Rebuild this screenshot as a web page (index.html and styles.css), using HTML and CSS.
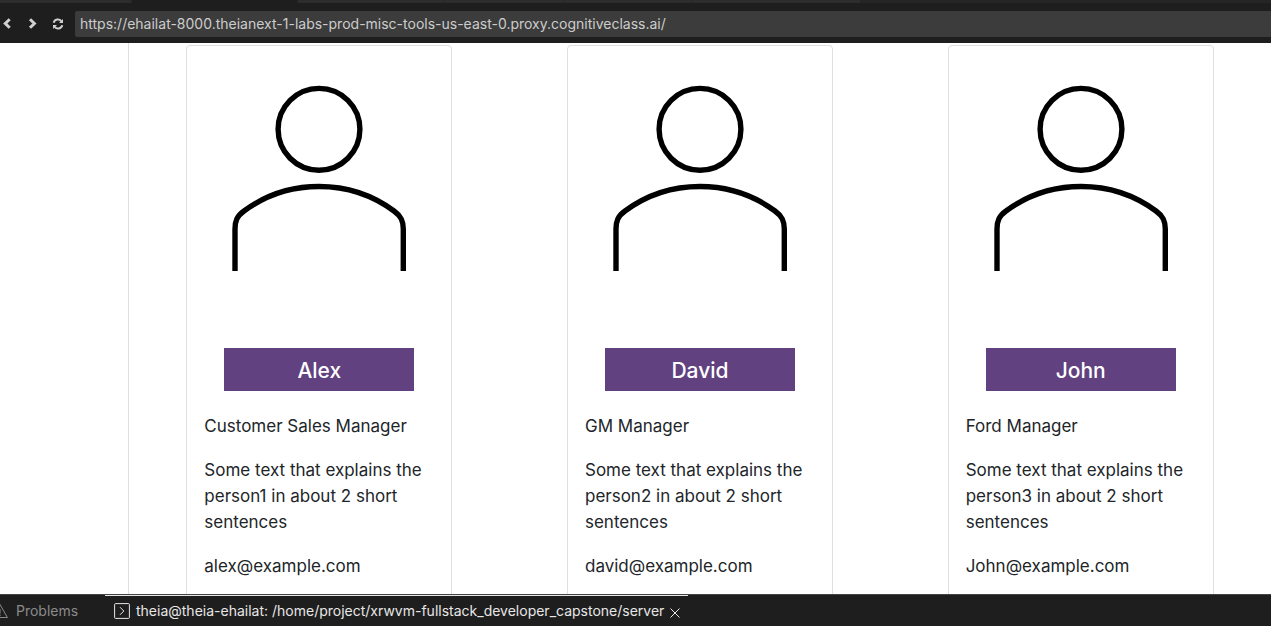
FILE: index.html
```
<!DOCTYPE html>
<html lang="en">
<head>
<meta charset="utf-8">
<meta name="viewport" content="width=device-width, initial-scale=1">
<title>About Us</title>
<link rel="stylesheet" href="styles.css">
</head>
<body>
<svg class="sprite" aria-hidden="true">
  <symbol id="person" viewBox="0 0 228 228">
    <g fill="none" stroke="#000" stroke-width="5.4">
      <circle cx="114" cy="65.3" r="40.9"/>
      <path d="M30 207V165C30 157 32 152 39 147C62 130 88 122.500 114 122.500C140 122.500 166 130 189 147C196 152 198.300 157 198.300 165V207"/>
    </g>
  </symbol>
</svg>
<div class="app">
  <header class="browser">
    <div class="tabs"><span class="tab tab-first"></span><span class="tab tab-active"></span><span class="tab tab-a"></span><span class="tab tab-b"></span><span class="tab tab-c"></span><span class="tab tab-d"></span></div>
    <div class="toolbar">
      <button class="nav" type="button" aria-label="Back"><svg width="12" height="12" viewBox="0 0 12 12"><path d="M7.700 1.200L3.300 5.500l4.400 4.300"/></svg></button>
      <button class="nav" type="button" aria-label="Forward"><svg width="12" height="12" viewBox="0 0 12 12"><path d="M3 1.200L7.400 5.500L3 9.800"/></svg></button>
      <button class="nav" type="button" aria-label="Reload"><svg width="12" height="12" viewBox="0 0 12 12"><path class="arc" d="M1.700 4.700A4.300 4.300 0 0 1 9.300 3.200M10.300 7.300A4.300 4.300 0 0 1 2.700 8.800"/><path class="solid" d="M11 1v4H7zM1 11V7h4z"/></svg></button>
      <input class="address" type="text" aria-label="Address" value="https://ehailat-8000.theianext-1-labs-prod-misc-tools-us-east-0.proxy.cognitiveclass.ai/">
    </div>
  </header>
  <main class="page">
    <div class="team">
      <article class="card">
        <svg class="portrait" role="img" aria-label="Person"><use href="#person"/></svg>
        <h2 class="name">Alex</h2>
        <p>Customer Sales Manager</p>
        <p>Some text that explains the person1 in about 2 short sentences</p>
        <p>alex@example.com</p>
      </article>
      <article class="card">
        <svg class="portrait" role="img" aria-label="Person"><use href="#person"/></svg>
        <h2 class="name">David</h2>
        <p>GM Manager</p>
        <p>Some text that explains the person2 in about 2 short sentences</p>
        <p>david@example.com</p>
      </article>
      <article class="card">
        <svg class="portrait" role="img" aria-label="Person"><use href="#person"/></svg>
        <h2 class="name">John</h2>
        <p>Ford Manager</p>
        <p>Some text that explains the person3 in about 2 short sentences</p>
        <p>John@example.com</p>
      </article>
    </div>
  </main>
  <footer class="panel">
    <button class="panel-tab problems" type="button"><svg width="16" height="16" viewBox="0 0 16 16"><path d="M8 1.500L15.400 14.500H.6zM8 6v4.500M8 11.500v1.500"/></svg>Problems</button>
    <div class="panel-tab terminal">
      <svg width="16" height="16" viewBox="0 0 16 16"><rect x=".6" y=".6" width="14.800" height="14.800" rx="1"/><path d="M6 4.200L9.800 8L6 11.800"/></svg>
      <span class="terminal-title">theia@theia-ehailat: /home/project/xrwvm-fullstack_developer_capstone/server</span>
      <button class="close" type="button" aria-label="Close"><svg width="10" height="10" viewBox="0 0 10 10"><path d="M.5.5l9 9M9.500.5l-9 9"/></svg></button>
    </div>
  </footer>
</div>
</body>
</html>
```
FILE: styles.css
```
* { box-sizing: border-box; }
body {
  margin: 0;
  background: #fff;
  color: #212529;
  font-family: Inter, "Liberation Sans", sans-serif;
  font-size: 17px;
  line-height: 26px;
}
button { border: 0; padding: 0; background: none; font: inherit; color: inherit; }
svg { display: block; flex: none; }
.sprite { position: absolute; width: 0; height: 0; }
.app { display: flex; flex-direction: column; height: 100vh; }

.browser { flex: none; background: #1e1e1e; }
.tabs { display: flex; gap: 1px; height: 3px; background: #252526; }
.tab { background: #2d2d2d; }
.tab-first { width: 131px; }
.tab-active { width: 165px; background: #1e1e1e; }
.tab-a { width: 146px; }
.tab-b { width: 118px; }
.tab-c { width: 128px; }
.tab-d { width: 167px; }
.toolbar { display: flex; align-items: center; padding: 8px 0 6px; }
.nav { width: 25px; height: 26px; padding-left: 2px; }
.nav svg { fill: none; stroke: #d0d0d0; stroke-width: 3; }
.nav .arc { stroke-width: 2; }
.nav .solid { fill: #d0d0d0; stroke: none; }
.address {
  flex: 1;
  min-width: 0;
  height: 26px;
  border: 0;
  border-radius: 2px 0 0 2px;
  padding: 0 5px 2px;
  background: #3c3c3c;
  color: #ccc;
  font: 14px Inter, "Liberation Sans", sans-serif;
}

.page { flex: 1; min-height: 0; overflow: hidden; padding-left: 128px; }
.team {
  display: grid;
  grid-template-columns: repeat(3, 1fr);
  justify-items: center;
  border-left: 1px solid #dfdfdf;
  padding-top: 2px;
}
.card {
  width: 70%;
  max-width: 266px;
  min-height: 600px;
  border: 1px solid #dfdfdf;
  border-radius: 4px;
  padding: 18px 17px;
}
.portrait { width: 100%; height: 228px; }
.name {
  margin: 56px 20px 22px;
  padding: 9px 0 7px;
  background: #61417f;
  color: #fff;
  font-size: 21px;
  line-height: 27px;
  font-weight: 500;
  text-align: center;
}
.card p { margin: 0 0 18px; }

.panel {
  flex: none;
  display: flex;
  height: 32px;
  border-top: 1px solid #444;
  background: #1e1e1e;
  color: #e7e7e7;
  font-size: 14px;
  line-height: 20px;
}
.panel svg { fill: none; stroke: currentColor; }
.panel-tab { display: flex; align-items: center; }
.problems { width: 105px; gap: 8px; color: #8b8b8b; }
.problems svg { margin-left: -8px; }
.terminal { border-top: 1px solid #e7e7e7; padding: 0 8px 0 9px; gap: 6px; }
.terminal-title { white-space: nowrap; }
.close { margin-top: 4px; }
```
